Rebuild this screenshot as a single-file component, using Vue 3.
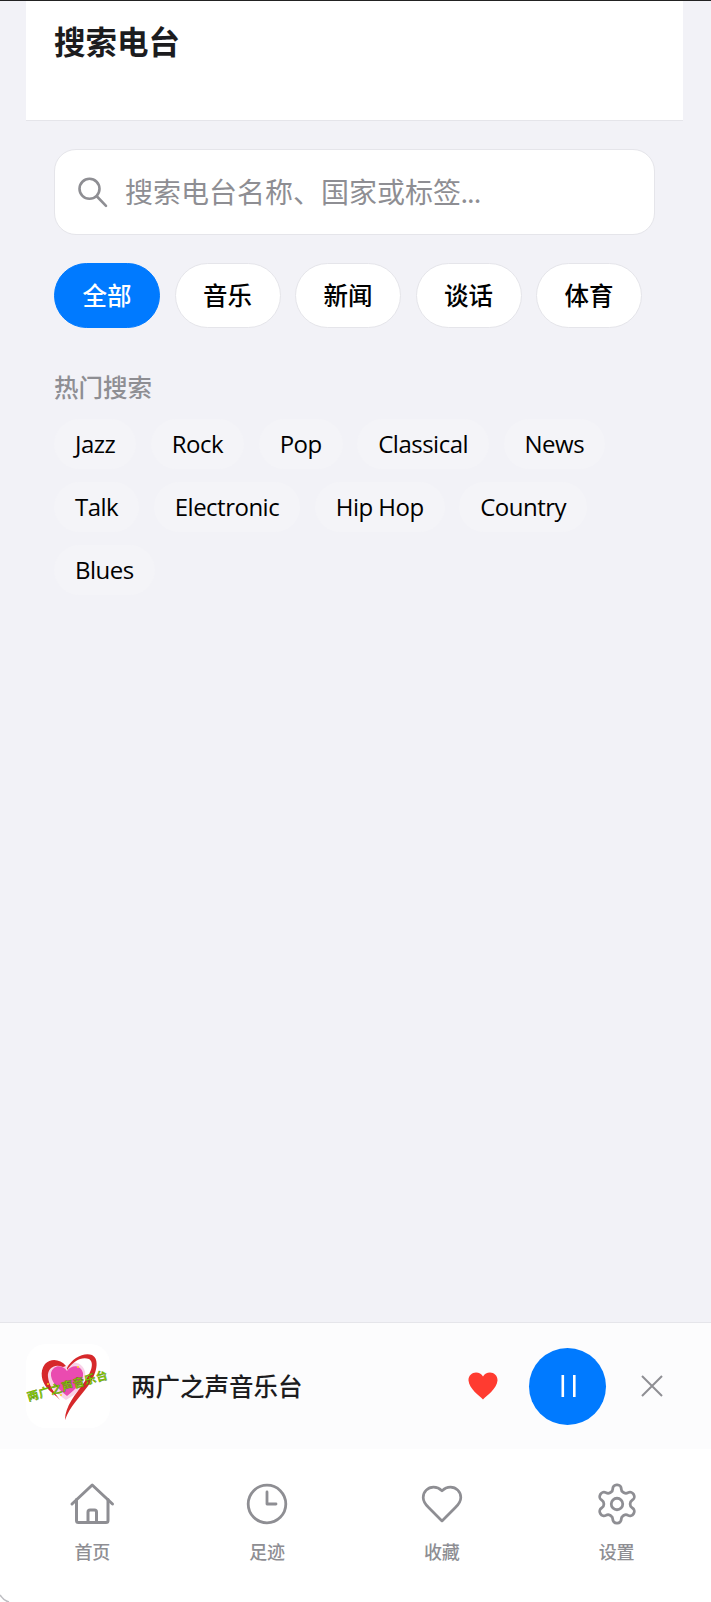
<template>
  <div class="page">
    <header class="top-bar">
      <h1>搜索电台</h1>
    </header>

    <main class="content">
      <label class="search-box">
        <svg class="search-icon" viewBox="0 0 32 32" fill="none" stroke="#8e8e93" stroke-width="2.6" stroke-linecap="round">
          <circle cx="13.5" cy="12.8" r="10" />
          <path d="M21 20.5 30 29.8" />
        </svg>
        <input type="text" placeholder="搜索电台名称、国家或标签..." />
      </label>

      <div class="categories">
        <button
          v-for="cat in categories"
          :key="cat"
          class="chip"
          :class="{ active: cat === activeCategory }"
        >{{ cat }}</button>
      </div>

      <h2 class="hot-title">热门搜索</h2>
      <div class="hot-tags">
        <span v-for="tag in hotTags" :key="tag" class="tag">{{ tag }}</span>
      </div>
    </main>

    <section class="player">
      <div class="cover">
        <svg viewBox="0 0 84 84" width="84" height="84">
          <path d="M40 23 C33 16 24 17 21 25 C18 33 24 44 33 51 L40 56 L48 51 C56 44 62 32 58 25 C54 17 45 17 40 23 Z" fill="#f8d3e8" />
          <path d="M41 27 C36 20 27 21 25 29 C24 37 32 45 41 52 C50 45 58 37 57 29 C55 21 46 20 41 27 Z" fill="#ea4bb0" />
          <path d="M41 24 C46 14 58 8 66 11 C74 15 71 30 62 42 C54 53 44 62 39 76 C39 62 50 50 57 40 C65 29 69 19 63 15 C56 12 47 17 41 26 Z" fill="#d6282b" />
          <path d="M40 22 C34 15 25 14 19 20 C13 28 16 38 21 44 C25 49 30 51 34 56 C28 48 23 42 22 33 C21 25 28 19 37 23 Z" fill="#d6282b" />
          <g fill="#ffd21f">
            <circle cx="52" cy="23" r="1" />
            <circle cx="22" cy="40" r="1" />
            <circle cx="35" cy="51" r="1" />
          </g>
          <text class="cover-text" x="41.500" y="46" text-anchor="middle" transform="rotate(-16 41.500 42)">两广之声音乐台</text>
        </svg>
      </div>
      <div class="station-name">两广之声音乐台</div>
      <div class="controls">
        <svg class="fav" viewBox="0 0 30 28" width="30" height="28">
          <path d="M15 27.500 C12 24 1 17 .5 8.500 C.3 3.500 4 .5 8 .5 C11 .5 13.500 2 15 4.500 C16.500 2 19 .5 22 .5 C26 .5 29.700 3.500 29.500 8.500 C29 17 18 24 15 27.500 Z" fill="#ff3b30" />
        </svg>
        <button class="play-btn">
          <svg viewBox="0 0 24 24" width="24" height="24" fill="#fff">
            <rect x="5.500" y="1" width="2.600" height="22" />
            <rect x="17" y="1" width="2.600" height="22" />
          </svg>
        </button>
        <svg class="close" viewBox="0 0 22 22" width="22" height="22" stroke="#8e8e93" stroke-width="2" fill="none">
          <path d="M1 1 21 21 M21 1 1 21" />
        </svg>
      </div>
    </section>

    <nav class="tabs">
      <div class="tab">
        <svg viewBox="0 0 48 48" width="48" height="48" fill="none" stroke="#8e8e93" stroke-width="3" stroke-linecap="round" stroke-linejoin="round">
          <path d="M4 24 24.200 5 44.500 24" />
          <path d="M8.500 19.500V40.500a2 2 0 0 0 2 2H38a2 2 0 0 0 2-2V19.500" />
          <path d="M20 42V32a2 2 0 0 1 2-2h4.500a2 2 0 0 1 2 2V42" />
        </svg>
        <span>首页</span>
      </div>
      <div class="tab">
        <svg viewBox="0 0 48 48" width="48" height="48" fill="none" stroke="#8e8e93" stroke-width="2.800" stroke-linecap="round" stroke-linejoin="round">
          <circle cx="24" cy="24" r="18.800" />
          <path d="M24 12V24H33" />
        </svg>
        <span>足迹</span>
      </div>
      <div class="tab">
        <svg viewBox="0 0 24 24" width="48" height="48" fill="none" stroke="#8e8e93" stroke-width="1.450" stroke-linecap="round" stroke-linejoin="round">
          <g transform="translate(12 12) scale(.94) translate(-12 -12)">
            <path d="M19 14c1.490-1.460 3-3.210 3-5.500A5.500 5.500 0 0 0 16.500 3c-1.760 0-3 .5-4.500 2-1.500-1.500-2.740-2-4.500-2A5.500 5.500 0 0 0 2 8.500c0 2.300 1.500 4.050 3 5.500l7 7Z" />
          </g>
        </svg>
        <span>收藏</span>
      </div>
      <div class="tab">
        <svg viewBox="0 0 24 24" width="48" height="48" fill="none" stroke="#8e8e93" stroke-width="1.450" stroke-linecap="round" stroke-linejoin="round">
          <g transform="translate(12 12) scale(.96) translate(-12 -12)">
            <path d="M12.220 2h-.44a2 2 0 0 0-2 2v.18a2 2 0 0 1-1 1.730l-.43.25a2 2 0 0 1-2 0l-.15-.08a2 2 0 0 0-2.730.73l-.22.38a2 2 0 0 0 .73 2.730l.15.1a2 2 0 0 1 1 1.720v.51a2 2 0 0 1-1 1.740l-.15.09a2 2 0 0 0-.73 2.730l.22.38a2 2 0 0 0 2.730.73l.15-.08a2 2 0 0 1 2 0l.43.25a2 2 0 0 1 1 1.730V20a2 2 0 0 0 2 2h.44a2 2 0 0 0 2-2v-.18a2 2 0 0 1 1-1.730l.43-.25a2 2 0 0 1 2 0l.15.08a2 2 0 0 0 2.730-.73l.22-.39a2 2 0 0 0-.73-2.730l-.15-.08a2 2 0 0 1-1-1.740v-.5a2 2 0 0 1 1-1.740l.15-.09a2 2 0 0 0 .73-2.730l-.22-.38a2 2 0 0 0-2.730-.73l-.15.08a2 2 0 0 1-2 0l-.43-.25a2 2 0 0 1-1-1.730V4a2 2 0 0 0-2-2z" />
            <circle cx="12" cy="12" r="3" />
          </g>
        </svg>
        <span>设置</span>
      </div>
    </nav>

    <svg class="corner" viewBox="0 0 10 8" width="10" height="8" fill="none" stroke="#bdbdc2" stroke-width="1.500">
      <path d="M0 1 C2 4 5 7 9 8" />
    </svg>
  </div>
</template>

<script setup>
const categories = ['全部', '音乐', '新闻', '谈话', '体育']
const activeCategory = '全部'
const hotTags = ['Jazz', 'Rock', 'Pop', 'Classical', 'News', 'Talk', 'Electronic', 'Hip Hop', 'Country', 'Blues']
</script>

<style scoped>
.page {
  position: relative;
  display: flex;
  flex-direction: column;
  height: 1602px;
  box-sizing: border-box;
  border-top: 1px solid #222;
  background: #f2f2f7;
  overflow: hidden;
  font-family: "Open Sans", "Noto Sans CJK SC", sans-serif;
  color: #1c1c1e;
}

.top-bar {
  height: 101px;
  margin: 0 28px 0 26px;
  padding: 18px 28px 0;
  background: #fff;
  border-bottom: 1px solid #e5e5ea;
}

.top-bar h1 {
  margin: 0;
  font-family: "Noto Sans CJK SC", sans-serif;
  font-size: 31.500px;
  line-height: 42px;
  font-weight: 700;
}

.content {
  flex: 1;
  padding: 28px 56px 0 54px;
}

.search-box {
  display: flex;
  align-items: center;
  gap: 17px;
  height: 86px;
  box-sizing: border-box;
  padding: 0 21px;
  background: #fff;
  border: 1px solid #e5e5ea;
  border-radius: 22px;
}

.search-icon {
  width: 32px;
  height: 32px;
  flex: none;
}

.search-box input {
  flex: 1;
  min-width: 0;
  border: 0;
  outline: 0;
  padding: 0 0 1px;
  background: transparent;
  font-family: Lato, "Noto Sans CJK SC", sans-serif;
  font-size: 28px;
  color: #1c1c1e;
}

.search-box input::placeholder {
  color: #8e8e93;
  opacity: 1;
}

.categories {
  display: flex;
  gap: 14.500px;
  margin-top: 28px;
}

.chip {
  width: 106px;
  height: 65px;
  padding: 0 0 3px;
  background: #fff;
  border: 1px solid #e5e5ea;
  border-radius: 33px;
  font-family: "Noto Sans CJK SC", sans-serif;
  font-size: 24.500px;
  font-weight: 500;
  color: #000;
}

.chip.active {
  background: #007aff;
  border-color: #007aff;
  color: #fff;
}

.hot-title {
  margin: 41px 0 0;
  font-family: "Noto Sans CJK SC", sans-serif;
  font-size: 24.500px;
  line-height: 36px;
  font-weight: 500;
  color: #8e8e93;
}

.hot-tags {
  display: flex;
  flex-wrap: wrap;
  gap: 13px 14.500px;
  margin-top: 14px;
}

.tag {
  height: 50px;
  line-height: 50px;
  padding: 0 21px;
  background: #f4f4f8;
  border-radius: 25px;
  font-size: 24px;
  letter-spacing: -0.5px;
  color: #000;
}

.player {
  display: flex;
  align-items: center;
  height: 127px;
  box-sizing: border-box;
  padding-left: 26px;
  background: #fcfcfd;
  border-top: 1px solid #e5e5ea;
}

.cover {
  width: 84px;
  height: 84px;
  flex: none;
  background: #fff;
  border-radius: 20px;
  overflow: hidden;
}

.cover-text {
  font-family: "Noto Sans CJK SC", sans-serif;
  font-size: 11.500px;
  letter-spacing: .4px;
  font-weight: 700;
  fill: #86d000;
  stroke: #3a5a00;
  stroke-width: 0.25px;
}

.station-name {
  flex: 1;
  margin-left: 21px;
  padding-bottom: 2px;
  font-family: "Noto Sans CJK SC", sans-serif;
  font-size: 24.500px;
  font-weight: 500;
  color: #1c1c1e;
}

.controls {
  display: flex;
  align-items: center;
  margin-right: 48px;
}

.fav {
  margin-right: 31px;
}

.play-btn {
  display: flex;
  align-items: center;
  justify-content: center;
  width: 77px;
  height: 77px;
  padding: 0;
  border: 0;
  border-radius: 50%;
  background: #007aff;
}

.close {
  margin-left: 35px;
}

.tabs {
  display: grid;
  grid-template-columns: repeat(4, 1fr);
  height: 153px;
  padding: 31px 7px 0 5px;
  box-sizing: border-box;
  background: #fff;
}

.tab {
  display: flex;
  flex-direction: column;
  align-items: center;
  gap: 10px;
}

.tab span {
  font-family: "Noto Sans CJK SC", sans-serif;
  font-size: 18px;
  line-height: 26px;
  font-weight: 500;
  color: #8e8e93;
}

.corner {
  position: absolute;
  left: 0;
  bottom: 0;
}
</style>
